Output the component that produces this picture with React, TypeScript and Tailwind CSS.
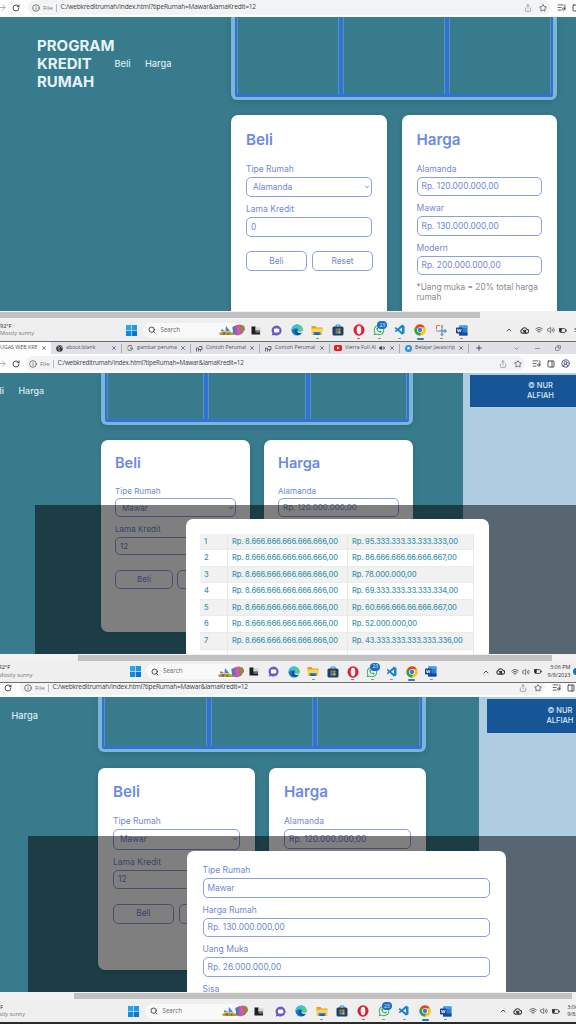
import React from "react";
import { ChevronDown, ChevronUp, CircleUserRound, Info, ListMusic, Minus, PanelRight, Plus, RotateCw, Search, Share, Star, Volume2, Wifi, X, ArrowRight, Copy } from "lucide-react";
import { FaWhatsapp } from "react-icons/fa";
import { VscVscode } from "react-icons/vsc";

const UI = "font-['Open_Sans','Noto_Sans',sans-serif]";

/* ---------- taskbar icons ---------- */

function WindowsLogo() {
  return (
    <svg viewBox="0 0 22 22" className="h-[11px] w-[11px] shrink-0">
      <path d="M0 0h10.4v10.4H0z" fill="#2ba5e8" />
      <path d="M11.6 0H22v10.4H11.6z" fill="#1f97e4" />
      <path d="M0 11.6h10.4V22H0z" fill="#1389dd" />
      <path d="M11.6 11.6H22V22H11.6z" fill="#0a76d2" />
    </svg>
  );
}

function SearchArt() {
  return (
    <svg viewBox="0 0 52 24" className="h-[12px] w-[26px] shrink-0">
      <path d="M0 18 8 16 30 17 36 22H2z" fill="#b99a2e" />
      <path d="M4 15h20l-3 5H6z" fill="#c98a3a" />
      <path d="M14 4 22 14h-9z" fill="#3b8fc4" />
      <path d="M5 10 12 14H4z" fill="#2a9bb3" />
      <circle cx="10" cy="19" r="2" fill="#7b3c8c" />
      <circle cx="19" cy="20" r="2" fill="#3a8f4a" />
      <path d="M27 6 35 2 43 1 50 4 52 11 46 20 36 23 29 19z" fill="#b45bb0" />
      <path d="M44 2 50 4 52 11 46 19 43 12z" fill="#6f9a3a" />
      <path d="M27 7 33 4 34 20 28 18z" fill="#4a7bc2" />
      <path d="M36 3 41 2 43 17 38 20z" fill="#dd5b96" />
      <circle cx="45" cy="10" r="3" fill="#d9662f" />
    </svg>
  );
}

function TaskView() {
  return (
    <svg viewBox="0 0 20 20" className="h-[9px] w-[10px]">
      <path d="M0 1h9v9h10v9H0z" fill="#1e1e1e" />
      <path d="M9 3h11v7H9z" fill="#d2d2d2" />
      <path d="M9 10h10v5H9z" fill="#6b6b6b" />
    </svg>
  );
}

function ChatIcon() {
  return (
    <svg viewBox="0 0 24 24" className="h-[11px] w-[11px]">
      <path d="M12 1a11 11 0 1 1-5 20.8L1.5 23 3 17.800A11 11 0 0 1 12 1z" fill="#6a5acb" />
      <rect x="6.500" y="7.500" width="11" height="9" rx="2.500" fill="#fff" />
      <path d="M14.500 11 18 8.500v7L14.500 13z" fill="#fff" />
    </svg>
  );
}

function EdgeIcon() {
  return (
    <svg viewBox="0 0 24 24" className="h-[12px] w-[12px]">
      <circle cx="12" cy="12" r="11" fill="#1278c8" />
      <path d="M1 11C2 4.500 7 1 12.500 1 19 1 23 6 23 10.500c0 3.500-2.500 5-5.500 5-2.500 0-4-.8-3.500-2 1.200-2.500-.8-5-4-5C6 8.500 2 10 1 14z" fill="#38c6d0" />
      <path d="M14 2c5 .8 9 4.500 9 8.500 0 3.500-2.500 5-5.500 5-2.500 0-4-.8-3.500-2C16 10 15 5 14 2z" fill="#55cf86" />
      <path d="M9 10c-3 3-1.500 9 4 11.500 3 .8 6.500-.5 8.500-3.500-4 1.500-8 .5-9.500-2-1-1.500-.8-3 .3-4.500z" fill="#114a8e" />
      <path d="M14 13.500c-.5 1.200 1 2 3.500 2 2.600 0 4.800-1 5.400-3l-.4 4.500c-3.500 1.800-9 1-9.800-1.800z" fill="#eef1f3" />
    </svg>
  );
}

function FolderIcon() {
  return (
    <svg viewBox="0 0 24 22" className="h-[11px] w-[12px]">
      <path d="M1 2h8l2 3h12v5H1z" fill="#e3a21c" />
      <path d="M1 7h22v13H1z" fill="#fcd257" />
      <path d="M5 14h14v6H5z" fill="#2f83d0" />
      <path d="M8 17h8v3H8z" fill="#185fa5" />
    </svg>
  );
}

function StoreIcon() {
  return (
    <svg viewBox="0 0 24 24" className="h-[12px] w-[12px]">
      <path d="M8 6V2h8v4" fill="none" stroke="#2492d8" strokeWidth="2" />
      <rect x="1" y="5" width="22" height="18" rx="3" fill="#1f3f66" />
      <path d="M7 9h4.500v4.500H7z" fill="#e9563a" />
      <path d="M12.500 9H17v4.500h-4.500z" fill="#80bc3b" />
      <path d="M7 14.500h4.500V19H7z" fill="#31a5e6" />
      <path d="M12.500 14.500H17V19h-4.500z" fill="#f6c12e" />
    </svg>
  );
}

function OperaIcon() {
  return (
    <svg viewBox="0 0 24 24" className="h-[12px] w-[12px]">
      <ellipse cx="12" cy="12" rx="11" ry="11.500" fill="#dd1f36" />
      <ellipse cx="12" cy="12" rx="4.700" ry="8.300" fill="#fbf3f3" />
    </svg>
  );
}

function WhatsAppIcon() {
  return (
    <span className="relative flex">
      <FaWhatsapp size={12} color="#2fa84f" />
      <span className="absolute -top-[3px] left-[4px] flex h-[8px] w-[10px] items-center justify-center rounded-full bg-[#1b6fc0] text-[5px] leading-none text-[#d7eaff]">
        23
      </span>
    </span>
  );
}

function ChromeIcon() {
  return (
    <svg viewBox="0 0 24 24" className="h-[12px] w-[12px]">
      <circle cx="12" cy="12" r="11.300" fill="#f8c51c" />
      <path d="M12 12 2.200 6.400A11.300 11.300 0 0 1 21.800 6.400z" fill="#df4233" />
      <path d="M2.200 6.400A11.300 11.300 0 0 0 11.500 23.300L16 14z" fill="#2fa151" />
      <path d="M12 6.400h9.800A11.300 11.300 0 0 1 11.500 23.300L17 14z" fill="#f8c51c" />
      <circle cx="12" cy="12" r="5.600" fill="#fff" />
      <circle cx="12" cy="12" r="4.300" fill="#3478e0" />
    </svg>
  );
}

function SnipIcon() {
  return (
    <svg viewBox="0 0 24 24" className="h-[12px] w-[12px]" fill="none">
      <path d="M3 3h11v11H3z" stroke="#bf7a62" strokeWidth="2.200" strokeDasharray="7 2" />
      <path d="M14 5v17M8 14h14" stroke="#4b9ccc" strokeWidth="2" />
      <circle cx="20" cy="14" r="2.600" stroke="#3b8ec4" strokeWidth="1.800" />
      <circle cx="14" cy="21" r="2.200" stroke="#3b8ec4" strokeWidth="1.600" />
    </svg>
  );
}

function WordIcon() {
  return (
    <svg viewBox="0 0 24 22" className="h-[11px] w-[12px]">
      <rect x="6" y="1" width="17" height="20" rx="1.500" fill="#2b7cd3" />
      <path d="M6 1h17v5H6z" fill="#41a0ea" />
      <path d="M6 15h17v6H6z" fill="#174a96" />
      <rect x="0" y="5" width="13" height="12" rx="1.500" fill="#16489a" />
      <path d="m2.800 8 1.800 6 1.900-5.500L8.400 14l1.800-6" fill="none" stroke="#fff" strokeWidth="1.500" />
    </svg>
  );
}

function CloudOff() {
  return (
    <svg viewBox="0 0 24 24" className="h-[9px] w-[9px]" fill="none" stroke="#333" strokeWidth="2.800">
      <path d="M6 19a5 5 0 0 1-.5-9.500A7 7 0 0 1 18.500 9 5 5 0 0 1 18 19z" />
      <path d="m8 11 8 8" />
      <circle cx="13" cy="14" r="2.500" />
    </svg>
  );
}

function BatteryIcon() {
  return (
    <svg viewBox="0 0 24 18" className="h-[7px] w-[9px]" fill="none" stroke="#2a2a2a" strokeWidth="2.200">
      <rect x="4" y="4" width="16" height="10" rx="2.500" />
      <path d="M22.500 7v4" />
      <path d="M2 3h8v8l-4 3z" fill="#2a2a2a" stroke="none" />
    </svg>
  );
}

type Dot = "none" | "gray" | "blue" | "red";

function Slot({ w, dot = "none", children }: { w: string; dot?: Dot; children: React.ReactNode }) {
  return (
    <span className={`relative flex h-full shrink-0 items-center justify-center ${w}`}>
      {children}
      {dot === "gray" && <i className="absolute bottom-[2px] h-[1.5px] w-[3px] rounded-full bg-[#8e8e8e]" />}
      {dot === "red" && <i className="absolute bottom-[2px] h-[1.5px] w-[3px] rounded-full bg-[#c8505a]" />}
      {dot === "blue" && <i className="absolute bottom-[1.5px] h-[1.5px] w-[7px] rounded-full bg-[#2f78bd]" />}
    </span>
  );
}

type TaskbarProps = {
  height: string;
  weather: React.ReactNode;
  lead: string;
  pill: string;
  view: string;
  slot: string;
  snip?: boolean;
  gap: string;
  step: string;
  clock: React.ReactNode;
};

function Taskbar({ height, weather, lead, pill, view, slot, snip, gap, step, clock }: TaskbarProps) {
  return (
    <footer className={`flex shrink-0 items-center overflow-hidden bg-[#efeff0] ${UI} ${height}`}>
      <div className={`shrink-0 text-[5.500px] leading-[7.500px] whitespace-nowrap ${lead}`}>{weather}</div>
      <WindowsLogo />
      <div className={`flex h-[15px] shrink-0 items-center rounded-full bg-[#f9f9fa] ${pill}`}>
        <Search size={8} strokeWidth={2.6} color="#333" className="shrink-0" />
        <span className="flex-1 pl-[4.500px] text-[6.200px] leading-none text-[#666]">Search</span>
        <SearchArt />
      </div>
      <Slot w={view}><TaskView /></Slot>
      <Slot w={slot}><ChatIcon /></Slot>
      <Slot w={slot}><EdgeIcon /></Slot>
      <Slot w={slot} dot="gray"><FolderIcon /></Slot>
      <Slot w={slot}><StoreIcon /></Slot>
      <Slot w={slot} dot="red"><OperaIcon /></Slot>
      <Slot w={slot} dot="gray"><WhatsAppIcon /></Slot>
      <Slot w={slot} dot="gray"><VscVscode size={12} color="#1a83cf" /></Slot>
      <Slot w={slot} dot="blue"><ChromeIcon /></Slot>
      {snip && <Slot w={slot} dot="gray"><SnipIcon /></Slot>}
      <Slot w={slot} dot="gray"><WordIcon /></Slot>
      <span className={`shrink-0 ${gap}`} />
      <Slot w={step}><ChevronUp size={8} strokeWidth={2.5} color="#333" /></Slot>
      <Slot w={step}><CloudOff /></Slot>
      <Slot w={step}><Wifi size={8} strokeWidth={2.6} color="#555" /></Slot>
      <Slot w="w-[8px]"><Volume2 size={8} strokeWidth={2} color="#444" /></Slot>
      <Slot w="w-[15px]"><BatteryIcon /></Slot>
      {clock}
    </footer>
  );
}

/* ---------- browser chrome ---------- */

type UrlBarProps = {
  height: string;
  nav: string;
  arrow?: boolean;
  pill: string;
  url: string;
  tools: string;
  avatar?: boolean;
};

function UrlBar({ height, nav, arrow, pill, url, tools, avatar }: UrlBarProps) {
  return (
    <div className={`flex shrink-0 items-start overflow-hidden bg-[#fdfdfe] text-[#444] ${UI} ${height}`}>
      <div className={`flex h-[15px] shrink-0 items-center ${nav}`}>
        {arrow && <ArrowRight size={9} strokeWidth={2} color="#999" className="-ml-[2px] mr-[5px] shrink-0" />}
        <RotateCw size={8} strokeWidth={2.8} color="#444" className="shrink-0" />
      </div>
      <div className={`flex h-[15px] shrink-0 items-center rounded-full bg-[#f1f3f4] pl-[4px] ${pill}`}>
        <Info size={8} strokeWidth={2.2} color="#555" className="shrink-0" />
        <span className="ml-[3px] w-[11.500px] shrink-0 text-[6px] leading-none text-[#777]">File</span>
        <span className="mr-[4px] ml-[1px] h-[8px] w-px shrink-0 bg-[#bbb]" />
        <span className={`flex-1 leading-none tracking-[-0.18px] whitespace-nowrap text-[#444] ${url}`}>
          C:/webkreditrumah/index.html?tipeRumah=Mawar&amp;lamaKredit=12
        </span>
        <Share size={8} strokeWidth={1.8} color="#777" className="mr-[7px]" />
        <Star size={8} strokeWidth={2.2} color="#444" />
      </div>
      <div className={`flex h-[15px] shrink-0 items-center gap-[6px] ${tools}`}>
        <ListMusic size={9} strokeWidth={2.2} color="#444" className="shrink-0" />
        <PanelRight size={8} strokeWidth={2.5} color="#333" className="shrink-0" />
        {avatar && <CircleUserRound size={9} strokeWidth={2.4} color="#4a5270" className="shrink-0" />}
      </div>
    </div>
  );
}

function Tab({ icon, label, w, audio }: { icon: React.ReactNode; label: string; w: string; audio?: boolean }) {
  return (
    <div className={`flex h-[9px] shrink-0 items-center border-r border-[#a9adb3] pr-[4px] pl-[4px] ${w}`}>
      <span className="flex w-[8px] shrink-0 justify-center">{icon}</span>
      <span className={`ml-[3px] shrink-0 overflow-hidden py-[1px] whitespace-nowrap ${audio ? "w-[31px]" : "w-[40px]"}`}>{label}</span>
      {audio && <Volume2 size={6} fill="#333" className="ml-[3px] shrink-0" />}
      <X size={6} strokeWidth={3} className="ml-auto shrink-0" />
    </div>
  );
}

function TabStrip() {
  const picture = (
    <svg viewBox="0 0 14 14" className="h-[7px] w-[7px]" fill="none" stroke="#666" strokeWidth="2">
      <path d="M1 13V6h4v7M6 3h6v6H6M9 9v4" />
    </svg>
  );
  return (
    <div className={`flex h-[12px] shrink-0 items-center overflow-hidden bg-[#dfe1e6] text-[5.300px] leading-none text-[#555] ${UI}`}>
      <div className="flex h-full w-[51px] shrink-0 items-center bg-[#fdfdfe] pr-[4px]">
        <span className="w-[38px] overflow-hidden whitespace-nowrap">UGAS WEB KRE</span>
        <X size={6} strokeWidth={3} className="ml-auto" />
      </div>
      <Tab
        w="w-[71px]"
        label="about:blank"
        icon={
          <svg viewBox="0 0 14 14" className="h-[7px] w-[7px]">
            <circle cx="7" cy="7" r="6.500" fill="#333" />
            <path d="m3 3 4 2-2 3 3 4M9 2l2 3 2 1" stroke="#ddd" strokeWidth="1.500" fill="none" />
          </svg>
        }
      />
      <Tab
        w="w-[69px]"
        label="gambar perumah"
        icon={
          <svg viewBox="0 0 14 14" className="h-[6px] w-[6px]" fill="none" strokeWidth="2.400">
            <path d="M11.500 3A6 6 0 0 0 2 4" stroke="#dc4a3e" />
            <path d="M2 4a6 6 0 0 0 0 6" stroke="#e8b52f" />
            <path d="M2 10a6 6 0 0 0 8 1.500" stroke="#3c9e55" />
            <path d="M7 7h6a6 6 0 0 1-3 4.500" stroke="#4079d6" />
          </svg>
        }
      />
      <Tab w="w-[69px]" label="Contoh Perumah" icon={picture} />
      <Tab w="w-[70px]" label="Contoh Perumah" icon={picture} />
      <Tab
        w="w-[70px]"
        audio
        label="Vierra Full Al"
        icon={
          <svg viewBox="0 0 16 12" className="h-[6px] w-[8px]">
            <rect width="16" height="12" rx="3" fill="#e02020" />
            <path d="m6 3 5 3-5 3z" fill="#fff" />
          </svg>
        }
      />
      <Tab
        w="w-[69px]"
        label="Belajar Javascrip"
        icon={
          <svg viewBox="0 0 14 14" className="h-[7px] w-[7px]">
            <circle cx="7" cy="7" r="7" fill="#2b8fe6" />
            <path d="M5 4v6l2-2 2 2V4z" fill="#fff" />
          </svg>
        }
      />
      <Plus size={8} strokeWidth={2.5} color="#333" className="ml-[6px] shrink-0" />
      <ChevronDown size={7} className="ml-[30px] shrink-0" />
      <Minus size={7} className="ml-[14px] shrink-0" />
      <Copy size={6} strokeWidth={2.4} className="ml-[14px] shrink-0 -scale-x-100" />
    </div>
  );
}

/* ---------- credit program page ---------- */

function Gallery({ size }: { size: string }) {
  return (
    <div className={`shrink-0 rounded-b-[6px] bg-[#7bb6da] px-[4px] pb-[3.5px] shadow-[0_2px_6px_rgba(0,0,0,0.12)] ${size}`}>
      <div className="grid h-full grid-cols-3 gap-[4px] rounded-b-[2px] bg-[#3073d1] px-[2px] pb-[2.5px]">
        <div className="border-x border-[#5590c6] bg-[#387b8c]" />
        <div className="border-x border-[#5590c6] bg-[#387b8c]" />
        <div className="border-x border-[#5590c6] bg-[#387b8c]" />
      </div>
    </div>
  );
}

type Metrics = {
  card: string;
  title: string;
  label: string;
  input: string;
  select: string;
  buttons: string;
  button: string;
};

const large: Metrics = {
  card: "px-[15px] pt-[14.500px]",
  title: "mb-[13px] h-[20px] text-[15.200px] leading-[20px]",
  label: "h-[14px] text-[8.500px] leading-[13px]",
  input: "mb-[6.200px] h-[19.500px] text-[8.400px]",
  select: "mb-[6.200px] h-[20.500px] text-[8.400px]",
  buttons: "mt-[14.500px] gap-[5px]",
  button: "h-[20px] w-[61px] text-[8.300px]",
};

const small: Metrics = {
  card: "px-[14px] pt-[13px]",
  title: "mb-[12px] h-[20px] text-[14.600px] leading-[20px]",
  label: "h-[13.500px] text-[8.100px] leading-[12px]",
  input: "mb-[6px] h-[18.500px] text-[8px]",
  select: "mb-[6px] h-[19px] text-[8px]",
  buttons: "mt-[14.500px] gap-[4px]",
  button: "h-[19px] w-[58px] text-[8px]",
};

function Field({ m, label, value, select }: { m: Metrics; label: string; value: string; select?: boolean }) {
  return (
    <div>
      <div className={`whitespace-nowrap ${m.label}`}>{label}</div>
      <div
        className={`flex items-center rounded-[5px] border border-[#8aa0dc] leading-none whitespace-nowrap ${select ? `pr-[1px] pl-[6px] ${m.select}` : `px-[4px] ${m.input}`}`}
      >
        {value}
        {select && <ChevronDown size={6} strokeWidth={4} className="ml-auto" />}
      </div>
    </div>
  );
}

function BuyCard({ m, size, type, term }: { m: Metrics; size: string; type: string; term: string }) {
  return (
    <section className={`shrink-0 rounded-[7px] bg-white shadow-[0_1px_5px_rgba(0,0,0,0.15)] ${m.card} ${size}`}>
      <h2 className={`font-semibold text-[#6c8ae2] ${m.title}`}>Beli</h2>
      <Field m={m} label="Tipe Rumah" value={type} select />
      <Field m={m} label="Lama Kredit" value={term} />
      <div className={`flex ${m.buttons}`}>
        <div className={`flex shrink-0 items-center justify-center rounded-[5px] border border-[#8aa0dc] ${m.button}`}>Beli</div>
        <div className={`flex shrink-0 items-center justify-center rounded-[5px] border border-[#8aa0dc] ${m.button}`}>Reset</div>
      </div>
    </section>
  );
}

function PriceCard({ m, size }: { m: Metrics; size: string }) {
  return (
    <section className={`shrink-0 rounded-[7px] bg-white shadow-[0_1px_5px_rgba(0,0,0,0.15)] ${m.card} ${size}`}>
      <h2 className={`font-semibold text-[#6c8ae2] ${m.title}`}>Harga</h2>
      <Field m={m} label="Alamanda" value="Rp. 120.000.000,00" />
      <Field m={m} label="Mawar" value="Rp. 130.000.000,00" />
      <Field m={m} label="Modern" value="Rp. 200.000.000,00" />
      <p className="text-[8.300px] leading-[10px] text-[#8b8b8b]">*Uang muka = 20% total harga rumah</p>
    </section>
  );
}

function Credit({ size, badge }: { size: string; badge: string }) {
  return (
    <aside className={`flex-1 overflow-hidden bg-[#afcde0] ${size}`}>
      <div className={`flex items-center bg-[#165697] text-center text-[7.500px] leading-[9.300px] font-medium whitespace-nowrap text-[#dbe8f6] ${badge}`}>
        <span>
          © NUR
          <br />
          ALFIAH
        </span>
      </div>
    </aside>
  );
}

const PAGE = "relative flex shrink-0 overflow-hidden bg-[#387b8c] font-['Inter',sans-serif] text-[#7089d4]";

const payments: string[] = [
  "Rp. 95.333.333.33.333.333,00",
  "Rp. 86.666.666.66.666.667,00",
  "Rp. 78.000.000,00",
  "Rp. 69.333.333.33.333.334,00",
  "Rp. 60.666.666.66.666.667,00",
  "Rp. 52.000.000,00",
  "Rp. 43.333.333.333.333.336,00",
  "",
];

function InstallmentModal() {
  return (
    <div className="absolute top-[132px] left-[35px] h-[149px] w-[541px] overflow-hidden bg-black/50">
      <div className="mt-[14px] ml-[150.500px] w-[303px] rounded-t-[7px] bg-white px-[14.500px] pt-[14.500px] pb-[40px]">
        {payments.map((left, i) => (
          <div
            key={i}
            className={`grid h-[16.600px] grid-cols-[28px_120px_1fr] border-b border-[#ebebeb] text-[7.500px] leading-[16px] font-medium tracking-[-0.02em] whitespace-nowrap text-[#3c95ae] ${i % 2 === 0 ? "bg-[#f1f1f1]" : "bg-white"}`}
          >
            <span className="border-r border-[#e8e8e8] pl-[4px]">{left ? i + 1 : ""}</span>
            <span className="border-r border-[#e8e8e8] pl-[4px]">{left ? "Rp. 8.666.666.666.666.666,00" : ""}</span>
            <span className="border-r border-[#e8e8e8] pl-[4px]">{left}</span>
          </div>
        ))}
      </div>
    </div>
  );
}

function DetailModal() {
  return (
    <div className="absolute top-[139px] left-[28px] h-[156px] w-[548px] overflow-hidden bg-black/50">
      <div className="mt-[14.500px] ml-[159px] w-[318.500px] rounded-t-[7px] bg-white px-[15.500px] pt-[13.500px] pb-[40px]">
        <Field m={large} label="Tipe Rumah" value="Mawar" />
        <Field m={large} label="Harga Rumah" value="Rp. 130.000.000,00" />
        <Field m={large} label="Uang Muka" value="Rp. 26.000.000,00" />
        <Field m={large} label="Sisa" value="" />
      </div>
    </div>
  );
}

/* ---------- three stacked desktop views ---------- */

function PriceView() {
  return (
    <section className="flex h-[342px] flex-col">
      <UrlBar height="h-[17px]" nav="w-[28px]" arrow pill="w-[522px] pr-[3px]" url="text-[6.600px]" tools="pl-[7px]" />
      <div className={`${PAGE} h-[294px]`}>
        <nav className="flex h-[94px] w-[231px] shrink-0 items-center pl-[37px] text-[9.200px] font-medium text-[#dcecf2]">
          <b className="w-[77.500px] text-[15px] leading-[18.300px] font-bold text-[#e6f2f6]">PROGRAM KREDIT RUMAH</b>
          <span className="w-[30.500px]">Beli</span>
          <span>Harga</span>
        </nav>
        <main className="shrink-0">
          <Gallery size="h-[83px] w-[326px]" />
          <div className="mt-[15px] flex gap-[15px]">
            <BuyCard m={large} size="h-[210px] w-[155.500px]" type="Alamanda" term="0" />
            <PriceCard m={large} size="h-[210px] w-[155.500px]" />
          </div>
        </main>
      </div>
      <div className="h-[8px] shrink-0 bg-[#f1f1f1] pt-[1px]">
        <div className="h-[6px] w-[480px] bg-[#c1c1c1]" />
      </div>
      <Taskbar
        height="h-[22px]"
        lead="w-[126px]"
        weather={<><div className="text-[#222]">92°F</div><div className="text-[#777]">Mostly sunny</div></>}
        pill="ml-[6px] w-[102px] pl-[5px]"
        view="w-[21px]"
        slot="w-[20.600px]"
        snip
        gap="w-[30px]"
        step="w-[15px]"
        clock={<span className="ml-[4px] text-[6px]">3:0</span>}
      />
      <div className="h-px shrink-0 bg-[#6e6e6e]" />
    </section>
  );
}

function InstallmentView() {
  return (
    <section className="flex h-[341px] flex-col">
      <TabStrip />
      <UrlBar height="h-[19px] pt-[2px]" nav="w-[25px]" arrow pill="w-[500px] pr-[3px]" url="text-[6.300px]" tools="pl-[7px]" avatar />
      <div className={`${PAGE} h-[281px]`}>
        <nav className="flex h-[36px] w-[101px] shrink-0 items-center text-[8.900px] font-medium text-[#dcecf2]">
          <span className="flex w-[4px] shrink-0 justify-end overflow-hidden">Beli</span>
          <span className="ml-[14.500px]">Harga</span>
        </nav>
        <main className="shrink-0">
          <Gallery size="h-[52px] w-[312px]" />
          <div className="mt-[14.500px] flex gap-[14px]">
            <BuyCard m={small} size="h-[192.500px] w-[149px]" type="Mawar" term="12" />
            <PriceCard m={small} size="h-[192.500px] w-[149px]" />
          </div>
        </main>
        <span className="w-[49.500px] shrink-0" />
        <Credit size="pt-[1.500px] pl-[7.500px]" badge="h-[32px] pl-[57px]" />
        <InstallmentModal />
      </div>
      <div className="h-[7px] shrink-0 bg-[#f1f1f1] pt-[1px]">
        <div className="ml-[78px] h-[6px] w-[474px] bg-[#c1c1c1]" />
      </div>
      <Taskbar
        height="h-[21px]"
        lead="w-[129.500px] -indent-[1.500px]"
        weather={<><div className="text-[#222]">92°F</div><div className="text-[#777]">Mostly sunny</div></>}
        pill="ml-[5px] w-[98.500px] pl-[5px]"
        view="w-[20px]"
        slot="w-[19.700px]"
        gap="w-[37.500px]"
        step="w-[14.600px]"
        clock={
          <div className="flex flex-1 items-center text-right text-[5.500px] leading-[7.500px] whitespace-nowrap text-[#333]">
            <span className="w-[25px] shrink-0">3:06 PM<br />9/8/2023</span>
            <i className="ml-[3px] h-[7px] w-[7px] shrink-0 rounded-full bg-[#1b6fc0]" />
          </div>
        }
      />
      <div className="h-px shrink-0 bg-[#6e6e6e]" />
    </section>
  );
}

function DetailView() {
  return (
    <section className="flex h-[341px] flex-col">
      <UrlBar height="h-[14px] [&>*]:-mt-[3px]" nav="w-[20px] pl-[4px]" pill="w-[525px] pr-[3px]" url="text-[6.600px]" tools="pl-[7px]" />
      <div className={`${PAGE} h-[295px]`}>
        <nav className="flex h-[38px] w-[98px] shrink-0 items-center pl-[11.500px] text-[9.200px] font-medium text-[#dcecf2]">Harga</nav>
        <main className="shrink-0">
          <Gallery size="h-[55px] w-[328px]" />
          <div className="mt-[15.500px] flex gap-[14.500px]">
            <BuyCard m={large} size="h-[202.500px] w-[156.500px]" type="Mawar" term="12" />
            <PriceCard m={large} size="h-[202.500px] w-[156.500px]" />
          </div>
        </main>
        <span className="w-[52.500px] shrink-0" />
        <Credit size="pt-[1.500px] pl-[8px]" badge="h-[34px] pl-[60px]" />
        <DetailModal />
      </div>
      <div className="h-[8px] shrink-0 bg-[#f1f1f1] pt-[1px]">
        <div className="ml-[74px] h-[6px] w-[498px] bg-[#c1c1c1]" />
      </div>
      <Taskbar
        height="h-[22px]"
        lead="w-[128px]"
        weather={
          <>
            <div className="flex w-[3px] justify-end overflow-hidden text-[#222]">92°F</div>
            <div className="flex w-[25px] justify-end overflow-hidden text-[#777]">Mostly sunny</div>
          </>
        }
        pill="ml-[6px] w-[103px] pl-[5px]"
        view="w-[22px]"
        slot="w-[20.700px]"
        gap="w-[39px]"
        step="w-[15px]"
        clock={<div className="ml-[4px] text-[5.500px] leading-[7.500px] text-[#333]">3:06<br />9/8/</div>}
      />
      <div className="h-[2px] shrink-0 bg-[#2a2a2a]" />
    </section>
  );
}

export default function App() {
  return (
    <div className="h-[1024px] w-[576px] overflow-hidden bg-white">
      <PriceView />
      <InstallmentView />
      <DetailView />
    </div>
  );
}
